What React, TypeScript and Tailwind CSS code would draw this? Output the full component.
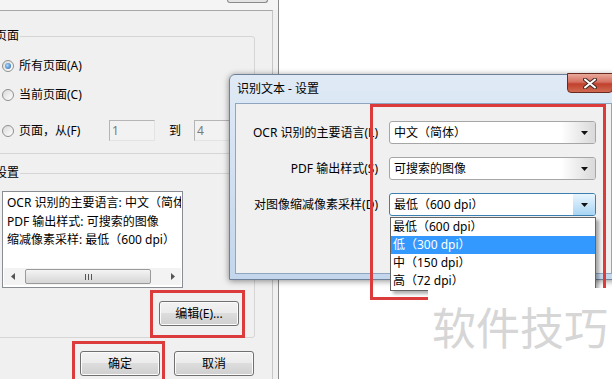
import React from 'react';

const font = "font-['Noto_Sans','Noto_Sans_CJK_SC',sans-serif]";

const Radio = ({ checked }: { checked?: boolean }) => (
  <span className="w-[12px] h-[12px] rounded-full border border-[#8e8f8f] bg-gradient-to-br from-[#d9d9d9] to-[#ffffff] flex items-center justify-center shrink-0">
    {checked && (
      <span className="w-[6px] h-[6px] rounded-full bg-[radial-gradient(circle_at_40%_40%,#a9dbff,#1d5aa3)]" />
    )}
  </span>
);

const WinButton = ({ children }: { children: React.ReactNode }) => (
  <button className="w-[80px] h-[25px] rounded-[3px] border border-[#707070] bg-[linear-gradient(#f2f2f2_0%,#ebebeb_50%,#dddddd_50%,#cfcfcf_100%)] shadow-[inset_0_0_0_1px_#fbfbfb] text-[12px] leading-none text-black">
    {children}
  </button>
);

const Arrow = () => (
  <svg width="7" height="4" viewBox="0 0 7 4">
    <polygon points="0,0 7,0 3.5,4" fill="#111" />
  </svg>
);

const Combo = ({ value, focused }: { value: string; focused?: boolean }) => (
  <div
    className={
      focused
        ? 'h-[23px] w-[207px] rounded-[3px] border border-[#3c7fb1] bg-white flex items-stretch overflow-hidden'
        : 'h-[23px] w-[207px] rounded-[3px] border border-[#a6a6a6] bg-white flex items-stretch overflow-hidden'
    }
  >
    <span className="flex-1 flex items-center pl-[4px] text-[12px] text-black whitespace-nowrap">{value}</span>
    {focused ? (
      <span className="w-[22px] flex items-center justify-center bg-gradient-to-b from-[#e9f5fd] to-[#a9d5f3]">
        <Arrow />
      </span>
    ) : (
      <span className="w-[34px] flex items-center justify-end pr-[7px] bg-gradient-to-r from-white to-[#d9d9d9]">
        <Arrow />
      </span>
    )}
  </div>
);

const ScrollArrow = ({ dir }: { dir: 'l' | 'r' }) => (
  <span className="w-[17px] flex items-center justify-center">
    <svg width="4" height="7" viewBox="0 0 4 7">
      <polygon points={dir === 'l' ? '4,0 4,7 0,3.5' : '0,0 0,7 4,3.5'} fill="#555" />
    </svg>
  </span>
);

export default function App() {
  return (
    <div className={`relative w-[612px] h-[379px] overflow-hidden bg-white ${font} text-black`}>
      {/* main dialog behind */}
      <div className="absolute left-[-12px] top-0 w-[291px] h-[379px] bg-[#f0f0f0] border-r border-[#8a8a8a] flex flex-col">
        <div className="h-[10px] flex justify-end pr-[10px] bg-[#f4f4f4]">
          <div className="w-[41px] h-[3px] border-x border-b border-[#8a8a8a] rounded-b-[3px] bg-[#e3e3e3]" />
        </div>
        <div className="flex-1 w-[285px] border-t border-r border-t-[#a8a8a8] border-r-[#c6c6c6] pl-[3px]">
          {/* 页面 */}
          <div className="relative mt-[25px] w-[264px] border border-[#d5d5d5] rounded-[3px] pt-[19px] pl-[10px] pb-[12px]">
            <span className="absolute -top-[9px] left-[2px] px-[1px] bg-[#f0f0f0] text-[12px] leading-[16px]">页面</span>
            <div className="h-[20px] flex items-center gap-[5px] text-[12px]">
              <Radio checked />
              <span>所有页面(A)</span>
            </div>
            <div className="mt-[9px] h-[20px] flex items-center gap-[5px] text-[12px]">
              <Radio />
              <span>当前页面(C)</span>
            </div>
            <div className="mt-[15px] h-[21px] flex items-center text-[12px]">
              <Radio />
              <span className="ml-[5px] w-[90px]">页面，从(F)</span>
              <span className="w-[46px] h-[21px] border border-[#b5b5b5] border-b-[#e3e3e3] border-r-[#e3e3e3] bg-[#f2f2f2] pl-[2px] flex items-center text-[#7a7a7a]">1</span>
              <span className="ml-[14px]">到</span>
              <span className="ml-[13px] w-[46px] h-[21px] border border-[#b5b5b5] border-b-[#e3e3e3] border-r-[#e3e3e3] bg-[#f2f2f2] pl-[2px] flex items-center text-[#7a7a7a]">4</span>
            </div>
          </div>

          {/* 设置 */}
          <div className="relative mt-[19px] w-[264px] border border-[#d5d5d5] rounded-[3px] pt-[17px] pl-[10px] pb-[11px]">
            <span className="absolute -top-[9px] left-[2px] px-[1px] bg-[#f0f0f0] text-[12px] leading-[16px]">设置</span>
            <div className="w-[181px] h-[97px] border border-[#8a8d93] bg-white flex flex-col px-[1px] pb-[2px]">
              <div className="flex-1 overflow-hidden whitespace-nowrap pl-[3px] pt-[2px] text-[12px] leading-[18.5px]">
                <div>OCR 识别的主要语言: 中文（简体）</div>
                <div>PDF 输出样式: 可搜索的图像</div>
                <div>缩减像素采样: 最低（600 dpi）</div>
              </div>
              <div className="h-[17px] flex bg-[#f3f3f3]">
                <ScrollArrow dir="l" />
                <div className="flex-1 flex items-stretch py-[1px]">
                  <div className="ml-[4px] w-[126px] rounded-[2px] border border-[#9a9a9a] bg-gradient-to-b from-[#f4f4f4] to-[#d6d6d6] flex items-center justify-center gap-[2px]">
                    <span className="w-[1px] h-[6px] bg-[#555]" />
                    <span className="w-[1px] h-[6px] bg-[#555]" />
                    <span className="w-[1px] h-[6px] bg-[#555]" />
                  </div>
                </div>
                <ScrollArrow dir="r" />
              </div>
            </div>
            <div className="mt-[13px] flex justify-end pr-[15px]">
              <WinButton>编辑(E)...</WinButton>
            </div>
          </div>

          <div className="mt-[13px] w-[264px] flex justify-end gap-[14px] pr-[1px]">
            <WinButton>确定</WinButton>
            <WinButton>取消</WinButton>
          </div>
        </div>
      </div>

      {/* settings dialog */}
      <div className="absolute left-[229px] top-[74px] w-[390px] h-[206px] rounded-t-[6px] border border-[#6f8198] bg-gradient-to-b from-[#e0eaf6] to-[#c3d6ec] shadow-[0_1px_6px_rgba(0,0,0,0.45)] flex flex-col">
        <div className="h-[28px] pl-[7px] flex items-center text-[12px]">识别文本 - 设置</div>
        <div className="absolute -top-[2px] right-[5px] w-[46px] h-[20px] rounded-b-[4px] border border-[#6b2a20] bg-[linear-gradient(#e9a99c_0%,#d47060_45%,#c1402c_55%,#cf6a52_100%)] flex items-center justify-center">
          <svg width="14" height="11" viewBox="0 0 14 11">
            <path d="M2 1.5 L12 9.5 M12 1.5 L2 9.5" stroke="#4a2a25" strokeWidth="4" strokeLinecap="round" />
            <path d="M2 1.5 L12 9.5 M12 1.5 L2 9.5" stroke="#ffffff" strokeWidth="2" strokeLinecap="round" />
          </svg>
        </div>
        <div className="flex-1 ml-[5px] mr-[6px] mb-[5px] border border-[#8fa6c1] bg-[#f0f0f0] pt-[17px] flex flex-col gap-[13px]">
          <div className="flex items-center gap-[11px]">
            <span className="w-[142px] text-right text-[12px] whitespace-nowrap">OCR 识别的主要语言(L)</span>
            <Combo value="中文（简体）" />
          </div>
          <div className="flex items-center gap-[11px]">
            <span className="w-[142px] text-right text-[12px] whitespace-nowrap">PDF 输出样式(S)</span>
            <Combo value="可搜索的图像" />
          </div>
          <div className="flex items-center gap-[11px]">
            <span className="w-[142px] text-right text-[12px] whitespace-nowrap">对图像缩减像素采样(D)</span>
            <div className="relative">
              <Combo value="最低（600 dpi）" focused />
              <ul className="absolute left-[1px] right-0 top-[24px] border border-[#646464] bg-white shadow-[3px_3px_3px_rgba(0,0,0,0.3)] text-[12px] z-10">
                <li className="h-[18px] pl-[2px] flex items-center">最低（600 dpi）</li>
                <li className="h-[18px] pl-[2px] flex items-center bg-[#3399ff] text-white">低（300 dpi）</li>
                <li className="h-[18px] pl-[2px] flex items-center">中（150 dpi）</li>
                <li className="h-[18px] pl-[2px] flex items-center">高（72 dpi）</li>
              </ul>
            </div>
          </div>
        </div>
      </div>

      {/* annotation boxes */}
      <div className="absolute left-[150px] top-[290px] w-[95px] h-[48px] border-[3px] border-[#dc3b3b]" />
      <div className="absolute left-[72px] top-[341px] w-[93px] h-[45px] border-[3px] border-[#dc3b3b]" />
      <div className="absolute left-[370px] top-[104px] w-[236px] h-[196px] border-[3px] border-[#dc3b3b] z-20" />

      {/* watermark */}
      <div className="absolute left-[428px] top-[288px] w-[184px] h-[91px] bg-white z-30 flex items-start justify-center pt-[12px]">
        <span className="text-[44px] leading-[52px] text-[#d6d6d6] font-['Noto_Sans_CJK_SC',sans-serif] tracking-[0px]">软件技巧</span>
      </div>
    </div>
  );
}
